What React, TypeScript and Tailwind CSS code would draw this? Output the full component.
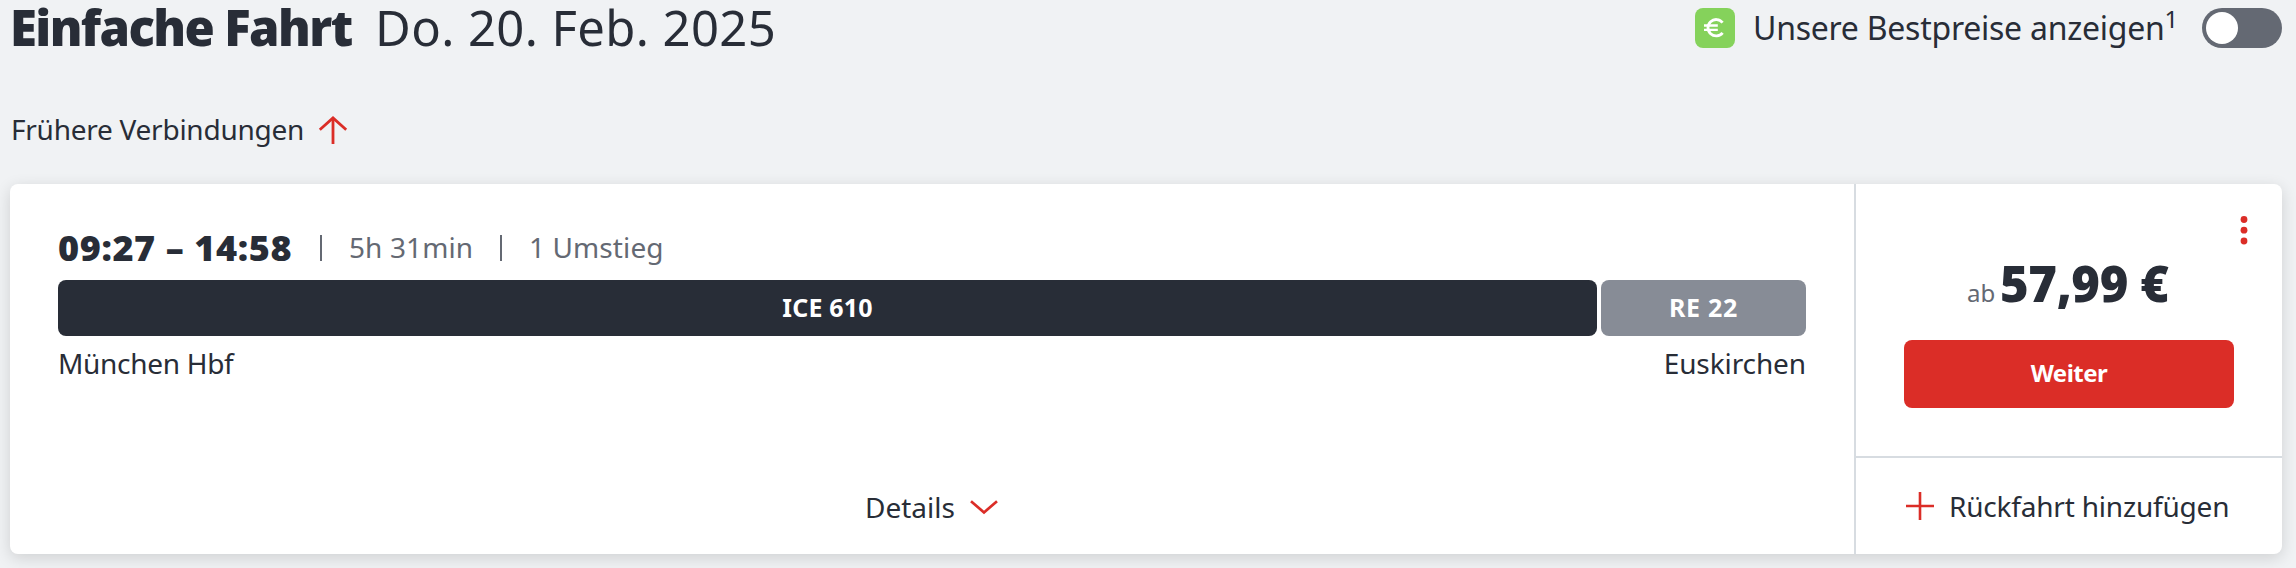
function ArrowUp() {
  return (
    <svg className="h-8 w-8" viewBox="0 0 32 32" fill="none" stroke="#db2d27" strokeWidth="2.8">
      <path d="M16 30V4" />
      <path d="M2.8 15.8L16 3.9L29.2 15.8" />
    </svg>
  );
}

function ChevronDown() {
  return (
    <svg className="h-[18px] w-8" viewBox="0 0 32 18" fill="none" stroke="#db2d27" strokeWidth="2.7">
      <path d="M3 3.2L16 14.4L29 3.2" />
    </svg>
  );
}

function Plus() {
  return (
    <svg className="h-8 w-8" viewBox="0 0 32 32" fill="none" stroke="#db2d27" strokeWidth="2.6">
      <path d="M16 2V30M2 16H30" />
    </svg>
  );
}

function EuroBadge() {
  return (
    <span className="flex h-10 w-10 items-center justify-center rounded-lg bg-[#85d25b]">
      <svg className="h-6 w-6" viewBox="0 0 24 24" fill="none" stroke="#ffffff" strokeWidth="2.8">
        <path d="M19.6 6.6A8.2 8.2 0 1 0 19.6 16.8" />
        <path d="M1 9.5H14.8M1 13.9H14.8" strokeWidth="2.3" />
      </svg>
    </span>
  );
}

function Header() {
  return (
    <header className="flex h-14 items-start justify-between pl-[10px] pr-[14px]">
      <h1 className="flex text-[49px] leading-[54px]">
        <span className="w-[365px] font-black tracking-[-1.6px]">Einfache Fahrt</span>
        <span className="tracking-[0.4px]">Do. 20. Feb. 2025</span>
      </h1>
      <div className="flex h-14 items-center">
        <EuroBadge />
        <span className="ml-[18px] flex w-[449px] text-[32px] leading-[56px] tracking-[-0.25px]">
          Unsere Bestpreise anzeigen
          <sup className="top-0 text-2xl leading-[38px]">1</sup>
        </span>
        <button className="flex h-10 w-20 items-center rounded-full bg-[#646973] p-1">
          <span className="h-8 w-8 rounded-full bg-white" />
        </button>
      </div>
    </header>
  );
}

function Journey() {
  return (
    <section className="flex w-[1844px] flex-col pl-12 pt-8">
      <div className="flex h-16 items-center text-[28px] text-[#646973]">
        <span className="w-[262px] text-[36px] font-black tracking-[0.6px] text-[#282d37]">09:27 – 14:58</span>
        <span className="h-[26px] w-0.5 bg-[#646973]" />
        <span className="ml-[27px] w-[151px] pb-0.5 tracking-[0.1px]">5h 31min</span>
        <span className="h-[26px] w-0.5 bg-[#646973]" />
        <span className="ml-[27px] pb-0.5 tracking-[0.1px]">1 Umstieg</span>
      </div>
      <div className="flex h-14 gap-1 text-[25px] font-bold text-white">
        <div className="flex w-[1539px] items-center justify-center rounded-lg bg-[#282d37] tracking-[0.2px]">ICE 610</div>
        <div className="flex w-[205px] items-center justify-center rounded-lg bg-[#878c96] tracking-[0.7px]">RE 22</div>
      </div>
      <div className="flex h-[54px] w-[1748px] items-center justify-between text-[28px]">
        <span className="tracking-[-0.3px]">München Hbf</span>
        <span className="tracking-[-0.1px]">Euskirchen</span>
      </div>
      <button className="mt-auto flex h-[94px] items-center pl-[807px] text-[28px]">
        Details
        <span className="ml-[13px]">
          <ChevronDown />
        </span>
      </button>
    </section>
  );
}

function Offer() {
  return (
    <aside className="flex flex-1 flex-col border-l-2 border-[#d7dce1]">
      <div className="flex h-[274px] flex-col border-b-2 border-[#d7dce1] px-12">
        <div className="-mr-[26px] flex h-[74px] items-end justify-end pb-3">
          <svg className="h-8 w-8" viewBox="0 0 32 32" fill="#db2d27">
            <circle cx="16" cy="5.5" r="3.4" />
            <circle cx="16" cy="16.2" r="3.4" />
            <circle cx="16" cy="27" r="3.4" />
          </svg>
        </div>
        <div className="flex h-[82px] items-baseline pl-[63px]">
          <span className="w-[33px] text-2xl text-[#646973]">ab</span>
          <span className="text-[49px] font-black leading-[50px] tracking-[-0.4px]">57,99 €</span>
        </div>
        <button className="flex h-[68px] w-[330px] items-center justify-center rounded-lg bg-[#db2d27] pb-0.5 text-2xl font-bold tracking-[-0.5px] text-white">
          Weiter
        </button>
      </div>
      <button className="flex flex-1 items-center pl-12 text-[28px] tracking-[-0.2px]">
        <Plus />
        <span className="ml-[13px]">Rückfahrt hinzufügen</span>
      </button>
    </aside>
  );
}

export default function App() {
  return (
    <main className="h-[568px] w-[2296px] overflow-hidden bg-[#f0f2f4] font-['Noto_Sans',sans-serif] text-[#282d37]">
      <Header />
      <button className="mt-[52px] flex h-11 items-center pl-[11px] text-[28px] tracking-[-0.25px]">
        <span className="pb-0.5">Frühere Verbindungen</span>
        <span className="ml-[13px]">
          <ArrowUp />
        </span>
      </button>
      <div className="ml-[10px] mt-8 flex h-[370px] w-[2272px] rounded-lg bg-white shadow-[0_4px_16px_rgba(0,0,0,0.14)]">
        <Journey />
        <Offer />
      </div>
    </main>
  );
}
